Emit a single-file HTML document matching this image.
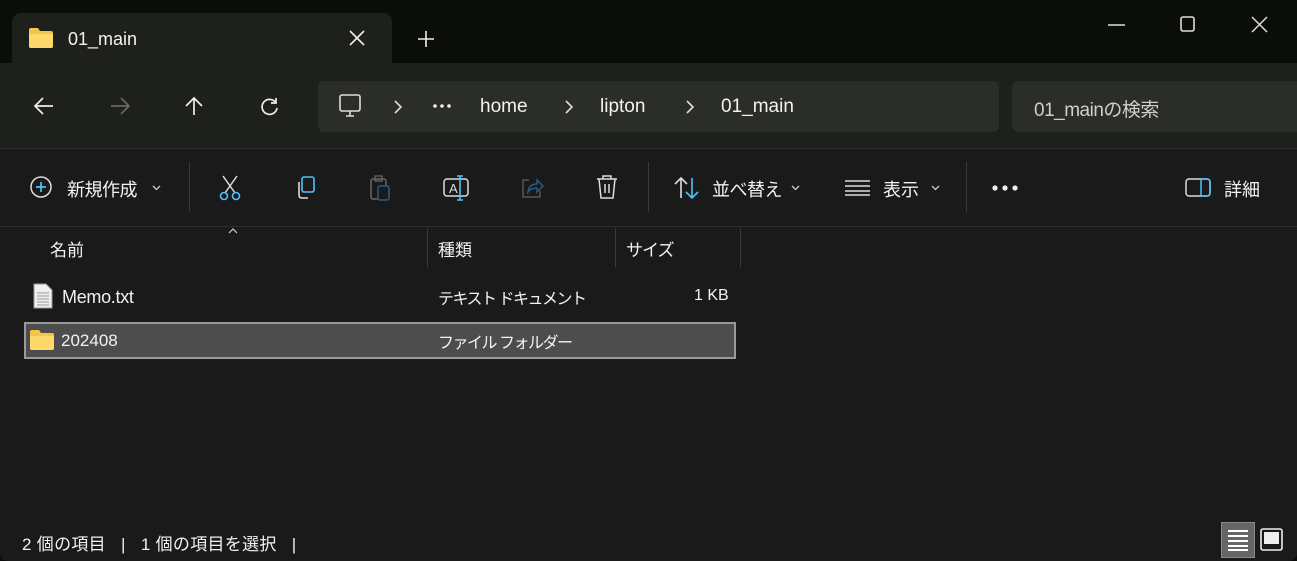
<!DOCTYPE html>
<html><head><meta charset="utf-8"><style>
*{margin:0;padding:0;box-sizing:border-box}
body{width:1297px;height:561px;background:#0b0e08;font-family:"Liberation Sans","Noto Sans CJK JP",sans-serif;color:#fff;position:relative;overflow:hidden}
.abs{position:absolute}
.t{font-size:19px;color:#f2f2f2;white-space:nowrap}
svg{position:absolute;overflow:visible}
</style></head><body>
<div class="abs" style="left:12px;top:13px;width:380px;height:52px;background:#1d201b;border-radius:9px 9px 0 0"></div>
<svg style="left:28px;top:27px" width="26" height="22"><path d="M1 3 Q1 1 3 1 H10 L12 4 H23 Q25 4 25 6 V19 Q25 21 23 21 H3 Q1 21 1 19Z" fill="#f5c44a"/><path d="M1 7 H25 V19 Q25 21 23 21 H3 Q1 21 1 19Z" fill="#ffd86a"/></svg>
<div class="abs t" style="left:68px;top:29px;font-size:18px">01_main</div>
<svg style="left:349px;top:30px" width="16" height="16"><path d="M1 1L15 15M15 1L1 15" stroke="#eee" stroke-width="1.6"/></svg>
<svg style="left:418px;top:31px" width="16" height="16"><path d="M8 0V16M0 8H16" stroke="#eee" stroke-width="1.6"/></svg>
<svg style="left:1108px;top:24px" width="18" height="2"><path d="M0 1H17" stroke="#ddd" stroke-width="1.4"/></svg>
<svg style="left:1180px;top:16px" width="16" height="16"><rect x="1" y="1" width="13" height="14" rx="2" fill="none" stroke="#ddd" stroke-width="1.6"/></svg>
<svg style="left:1251px;top:16px" width="16" height="16"><path d="M1 1L16 16M16 1L1 16" stroke="#ddd" stroke-width="1.5"/></svg>
<div class="abs" style="left:0;top:63px;width:1297px;height:86px;background:#1d201b;border-bottom:1px solid #2c2d2b"></div>
<svg style="left:34px;top:97px" width="20" height="18"><path d="M19 9H2M9 1L1 9L9 17" stroke="#eee" stroke-width="1.7" fill="none"/></svg>
<svg style="left:110px;top:97px" width="20" height="18"><path d="M1 9H18M11 1L19 9L11 17" stroke="#666" stroke-width="1.7" fill="none"/></svg>
<svg style="left:185px;top:96px" width="18" height="20"><path d="M9 19V2M1 10L9 2L17 10" stroke="#eee" stroke-width="1.7" fill="none"/></svg>
<svg style="left:260px;top:97px" width="20" height="20"><path d="M16 6A7.5 7.5 0 1 0 17 11" stroke="#eee" stroke-width="1.7" fill="none"/><path d="M16 1V6H11" stroke="#eee" stroke-width="1.7" fill="none"/></svg>
<div class="abs" style="left:318px;top:81px;width:681px;height:51px;background:#2b2d28;border-radius:6px"></div>
<svg style="left:338px;top:94px" width="24" height="24"><rect x="2" y="1" width="20" height="16" rx="2" fill="none" stroke="#ddd" stroke-width="1.6"/><path d="M8 22H16M12 17V22" stroke="#ddd" stroke-width="1.6"/></svg>
<svg style="left:394px;top:100px" width="8" height="14"><path d="M1 1L7 7L1 13" stroke="#ddd" stroke-width="1.6" fill="none"/></svg>
<svg style="left:433px;top:104px" width="20" height="4"><circle cx="2" cy="2" r="1.8" fill="#eee"/><circle cx="9" cy="2" r="1.8" fill="#eee"/><circle cx="16" cy="2" r="1.8" fill="#eee"/></svg>
<div class="abs t" style="left:480px;top:96px">home</div>
<svg style="left:565px;top:100px" width="8" height="14"><path d="M1 1L7 7L1 13" stroke="#ddd" stroke-width="1.6" fill="none"/></svg>
<div class="abs t" style="left:600px;top:96px">lipton</div>
<svg style="left:686px;top:100px" width="8" height="14"><path d="M1 1L7 7L1 13" stroke="#ddd" stroke-width="1.6" fill="none"/></svg>
<div class="abs t" style="left:721px;top:96px">01_main</div>
<div class="abs" style="left:1012px;top:81px;width:300px;height:51px;background:#2b2d28;border-radius:6px"></div>
<div class="abs t" style="left:1034px;top:95px;color:#cfcfcf;letter-spacing:-0.5px">01_mainの検索</div>
<div class="abs" style="left:0;top:149px;width:1297px;height:412px;background:#1a1a1a;border-radius:0 0 8px 8px"></div>
<div class="abs" style="left:0;top:226px;width:1297px;height:1px;background:#2e2e2e"></div>
<svg style="left:30px;top:176px" width="24" height="24"><circle cx="11" cy="11" r="10" fill="none" stroke="#ddd" stroke-width="1.5"/><path d="M11 6V16M6 11H16" stroke="#4cc2ff" stroke-width="1.7"/></svg>
<div class="abs t" style="left:67px;top:176px;font-size:18px;letter-spacing:-0.5px">新規作成</div>
<svg style="left:152px;top:185px" width="9" height="6"><path d="M1 1L4.5 4.5L8 1" stroke="#ccc" stroke-width="1.3" fill="none"/></svg>
<div class="abs" style="left:189px;top:162px;width:1px;height:50px;background:#3a3a3a"></div>
<div class="abs" style="left:648px;top:162px;width:1px;height:50px;background:#3a3a3a"></div>
<div class="abs" style="left:966px;top:162px;width:1px;height:50px;background:#3a3a3a"></div>
<svg style="left:218px;top:175px" width="26" height="26"><path d="M5 1L17 18M19 1L7 18" stroke="#ddd" stroke-width="1.5"/><circle cx="6" cy="21" r="3.5" fill="none" stroke="#4cc2ff" stroke-width="1.6"/><circle cx="18" cy="21" r="3.5" fill="none" stroke="#4cc2ff" stroke-width="1.6"/></svg>
<svg style="left:294px;top:176px" width="24" height="24"><rect x="8" y="1" width="12" height="15" rx="2" fill="none" stroke="#4cc2ff" stroke-width="1.6"/><path d="M5 6V19Q5 22 8 22H14" stroke="#ddd" stroke-width="1.6" fill="none"/></svg>
<svg style="left:370px;top:175px" width="24" height="26"><rect x="1" y="4" width="15" height="20" rx="2" fill="none" stroke="#666" stroke-width="1.5"/><rect x="8" y="11" width="11" height="14" rx="2" fill="#1a1a1a" stroke="#2a5d80" stroke-width="1.5"/><rect x="5" y="1" width="7" height="5" fill="none" stroke="#666" stroke-width="1.3"/></svg>
<svg style="left:443px;top:175px" width="28" height="26"><rect x="1" y="4" width="24" height="17" rx="3" fill="none" stroke="#ddd" stroke-width="1.5"/><text x="6" y="18" font-size="13" fill="#ddd" font-family="Liberation Sans">A</text><path d="M17 1V25M14 1H20M14 25H20" stroke="#4cc2ff" stroke-width="1.6"/></svg>
<svg style="left:520px;top:176px" width="24" height="24"><path d="M9 4H3V21H20V15" stroke="#555" stroke-width="1.5" fill="none"/><path d="M8 16Q9 8 17 8V4L23 10L17 16V12Q11 12 8 16Z" fill="none" stroke="#2a5d80" stroke-width="1.5"/></svg>
<svg style="left:596px;top:175px" width="22" height="26"><path d="M1 4H21M7 4V1H15V4M3 4L5 23H17L19 4M9 9V18M13 9V18" stroke="#ddd" stroke-width="1.5" fill="none"/></svg>
<svg style="left:674px;top:176px" width="26" height="24"><path d="M7 22V2M1 8L7 2L13 8" stroke="#ddd" stroke-width="1.6" fill="none"/><path d="M18 2V22M12 16L18 22L24 16" stroke="#4cc2ff" stroke-width="1.6" fill="none"/></svg>
<div class="abs t" style="left:712px;top:176px;font-size:18px;letter-spacing:-0.5px">並べ替え</div>
<svg style="left:791px;top:185px" width="9" height="6"><path d="M1 1L4.5 4.5L8 1" stroke="#ccc" stroke-width="1.3" fill="none"/></svg>
<svg style="left:845px;top:180px" width="26" height="16"><path d="M0 1H25M0 6H25M0 11H25M0 15H25" stroke="#ddd" stroke-width="1.4"/></svg>
<div class="abs t" style="left:883px;top:176px;font-size:18px">表示</div>
<svg style="left:931px;top:185px" width="9" height="6"><path d="M1 1L4.5 4.5L8 1" stroke="#ccc" stroke-width="1.3" fill="none"/></svg>
<svg style="left:992px;top:185px" width="28" height="6"><circle cx="3" cy="3" r="2.6" fill="#eee"/><circle cx="13" cy="3" r="2.6" fill="#eee"/><circle cx="23" cy="3" r="2.6" fill="#eee"/></svg>
<svg style="left:1185px;top:178px" width="28" height="20"><rect x="1" y="1" width="24" height="17" rx="3" fill="none" stroke="#ddd" stroke-width="1.5"/><path d="M16 1V18" stroke="#4cc2ff" stroke-width="1.5"/><path d="M16 1H22Q25 1 25 4V15Q25 18 22 18H16" stroke="#4cc2ff" stroke-width="1.6" fill="none"/></svg>
<div class="abs t" style="left:1224px;top:176px;font-size:18px">詳細</div>
<svg style="left:228px;top:228px" width="10" height="6"><path d="M1 5L5 1L9 5" stroke="#ccc" stroke-width="1.2" fill="none"/></svg>
<div class="abs t" style="left:50px;top:236px;font-size:17px">名前</div>
<div class="abs" style="left:427px;top:228px;width:1px;height:39px;background:#3a3a3a"></div>
<div class="abs t" style="left:438px;top:236px;font-size:17px">種類</div>
<div class="abs" style="left:615px;top:228px;width:1px;height:39px;background:#3a3a3a"></div>
<div class="abs t" style="left:626px;top:236px;font-size:17px;letter-spacing:-1px">サイズ</div>
<div class="abs" style="left:740px;top:228px;width:1px;height:39px;background:#3a3a3a"></div>
<svg style="left:33px;top:283px" width="20" height="26"><path d="M1 1H13L19 7V25H1Z" fill="#f0f0f0" stroke="#999"/><path d="M4 10H16M4 13H16M4 16H16M4 19H16M4 22H16" stroke="#999"/></svg>
<div class="abs t" style="left:62px;top:287px;font-size:18px;letter-spacing:-0.3px">Memo.txt</div>
<div class="abs t" style="left:438px;top:285px;font-size:16px;letter-spacing:-1.5px">テキスト ドキュメント</div>
<div class="abs t" style="left:694px;top:287px;font-size:16px">1 KB</div>
<div class="abs" style="left:24px;top:322px;width:712px;height:37px;background:#4d4d4d;border:2px solid #999"></div>
<svg style="left:29px;top:329px" width="26" height="22"><path d="M1 3Q1 1 3 1H10L12 4H23Q25 4 25 6V19Q25 21 23 21H3Q1 21 1 19Z" fill="#f5c44a"/><path d="M1 7H25V19Q25 21 23 21H3Q1 21 1 19Z" fill="#ffd86a"/></svg>
<div class="abs t" style="left:61px;top:331px;font-size:17px">202408</div>
<div class="abs t" style="left:438px;top:329px;font-size:16px;letter-spacing:-1.5px">ファイル フォルダー</div>
<div class="abs t" style="left:22px;top:530px;font-size:17px;letter-spacing:0.3px">2 個の項目 &nbsp;&nbsp;| &nbsp;&nbsp;1 個の項目を選択 &nbsp;&nbsp;|</div>
<div class="abs" style="left:1221px;top:522px;width:34px;height:36px;background:#666;border:1px solid #888"></div>
<svg style="left:1227px;top:528px" width="22" height="24"><path d="M1 3H21M1 8H21M1 13H21M1 18H21M1 22H21" stroke="#fff" stroke-width="2"/></svg>
<svg style="left:1260px;top:528px" width="24" height="24"><rect x="1" y="1" width="21" height="21" rx="2" fill="none" stroke="#eee" stroke-width="1.6"/><rect x="4" y="4" width="15" height="12" fill="#eee"/></svg>
</body></html>
